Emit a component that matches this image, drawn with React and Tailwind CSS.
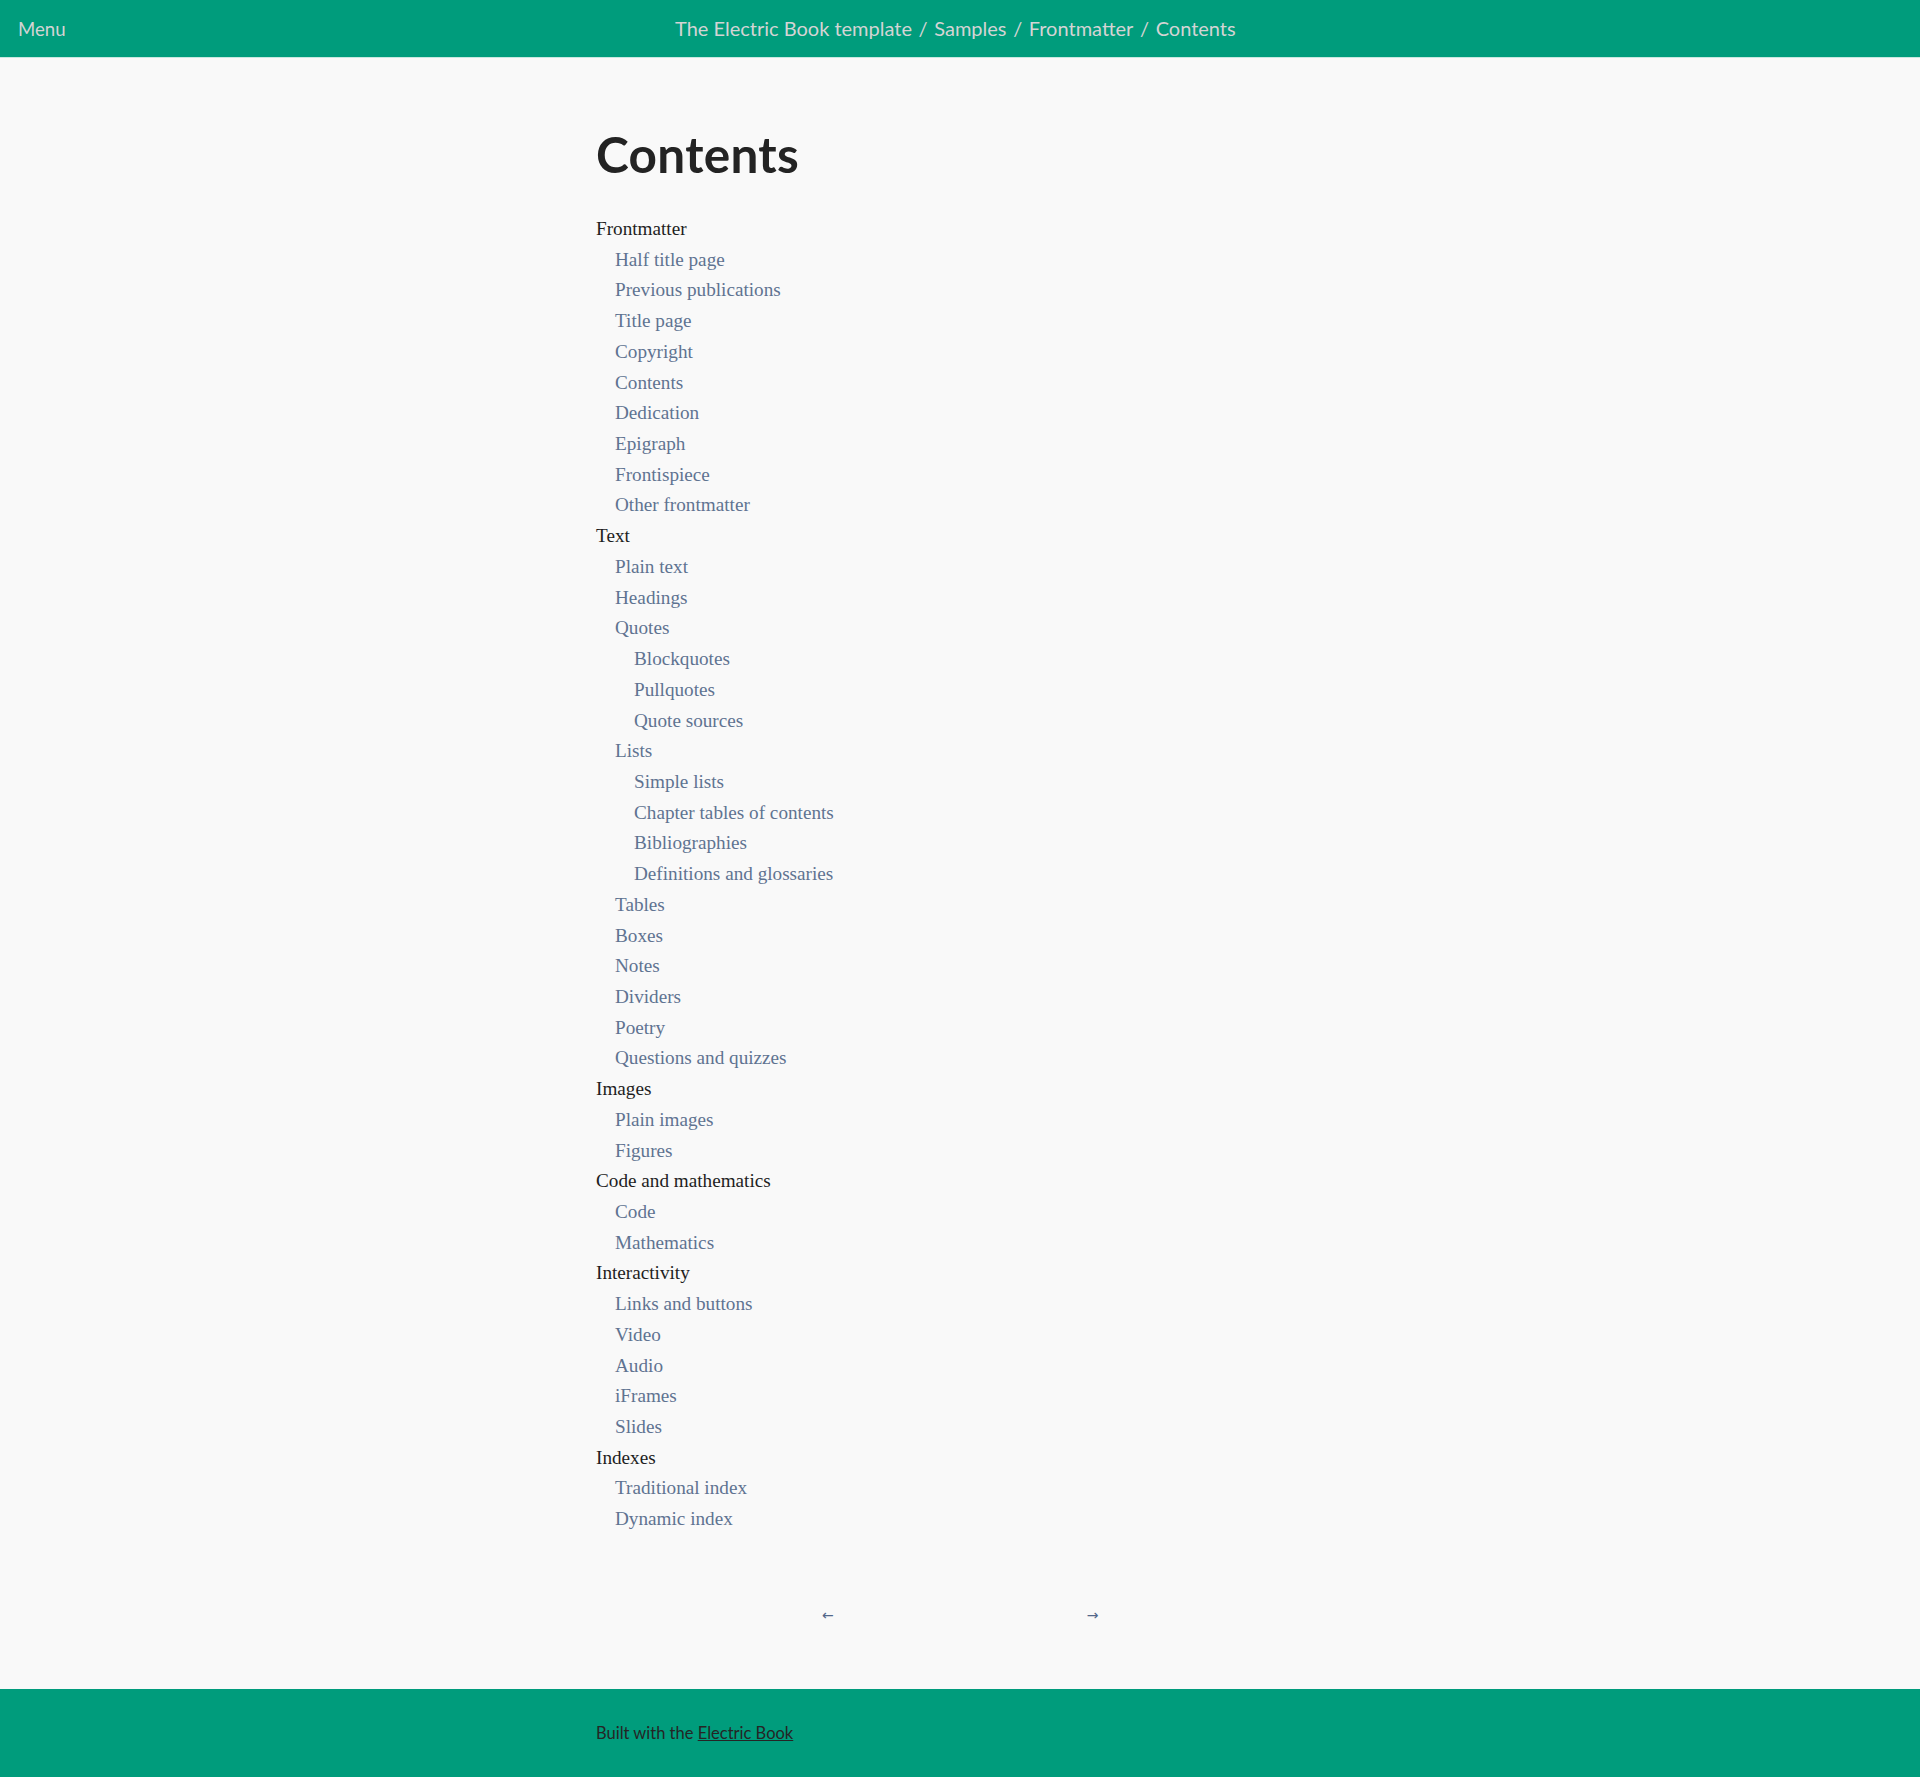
import React from 'react';

const toc = [
  { t: 'Frontmatter', l: 0 },
  { t: 'Half title page', l: 1 },
  { t: 'Previous publications', l: 1 },
  { t: 'Title page', l: 1 },
  { t: 'Copyright', l: 1 },
  { t: 'Contents', l: 1 },
  { t: 'Dedication', l: 1 },
  { t: 'Epigraph', l: 1 },
  { t: 'Frontispiece', l: 1 },
  { t: 'Other frontmatter', l: 1 },
  { t: 'Text', l: 0 },
  { t: 'Plain text', l: 1 },
  { t: 'Headings', l: 1 },
  { t: 'Quotes', l: 1 },
  { t: 'Blockquotes', l: 2 },
  { t: 'Pullquotes', l: 2 },
  { t: 'Quote sources', l: 2 },
  { t: 'Lists', l: 1 },
  { t: 'Simple lists', l: 2 },
  { t: 'Chapter tables of contents', l: 2 },
  { t: 'Bibliographies', l: 2 },
  { t: 'Definitions and glossaries', l: 2 },
  { t: 'Tables', l: 1 },
  { t: 'Boxes', l: 1 },
  { t: 'Notes', l: 1 },
  { t: 'Dividers', l: 1 },
  { t: 'Poetry', l: 1 },
  { t: 'Questions and quizzes', l: 1 },
  { t: 'Images', l: 0 },
  { t: 'Plain images', l: 1 },
  { t: 'Figures', l: 1 },
  { t: 'Code and mathematics', l: 0 },
  { t: 'Code', l: 1 },
  { t: 'Mathematics', l: 1 },
  { t: 'Interactivity', l: 0 },
  { t: 'Links and buttons', l: 1 },
  { t: 'Video', l: 1 },
  { t: 'Audio', l: 1 },
  { t: 'iFrames', l: 1 },
  { t: 'Slides', l: 1 },
  { t: 'Indexes', l: 0 },
  { t: 'Traditional index', l: 1 },
  { t: 'Dynamic index', l: 1 },
];

const indent = ['pl-0', 'pl-[19px]', 'pl-[38px]'];

const crumbs = ['The Electric Book template', 'Samples', 'Frontmatter', 'Contents'];

const App = () => {
  return (
    <div className="min-h-[1777px] flex flex-col bg-[#f9f9f9]">
      {/* header */}
      <header className="h-[58px] bg-[#009c7c] border-b border-[#c8e8e0] flex items-center font-['Lato',sans-serif] text-[#d4d4d4]">
        <span className="pl-[18px] w-[675px] text-[18.6px] pt-[2px]">Menu</span>
        <nav className="text-[20px] mb-[1px]">
          {crumbs.map((c, i) => (
            <React.Fragment key={c}>
              {i > 0 && <span className="mx-[1.5px]"> / </span>}
              {c}
            </React.Fragment>
          ))}
        </nav>
      </header>

      <main className="flex-1 w-[728px] mx-auto pt-[66px]">
        <h1 className="font-['Lato',sans-serif] font-bold text-[49.5px] leading-[60px] text-[#232323] tracking-[0.3px]">Contents</h1>

        <ul className="mt-[30px] font-['Liberation_Serif',serif] text-[19.2px] leading-[30.72px]">
          {toc.map((item, i) => (
            <li key={i} className={`${indent[item.l]} ${item.l === 0 ? 'text-[#1e1e1e]' : 'text-[#5f7391]'}`}>
              {item.t}
            </li>
          ))}
        </ul>

        <div className="mt-[68px] flex font-['DejaVu_Sans',sans-serif] text-[14px] leading-[24px] text-[#53688a]">
          <span className="ml-[226px]">←</span>
          <span className="ml-[253px]">→</span>
        </div>
      </main>

      <footer className="mt-[62px] h-[88px] bg-[#009c7c] flex items-center">
        <div className="w-[728px] mx-auto font-['Lato',sans-serif] text-[16.5px] text-[#252525]">
          Built with the <span className="underline">Electric Book</span>
        </div>
      </footer>
    </div>
  );
};

export default App;
